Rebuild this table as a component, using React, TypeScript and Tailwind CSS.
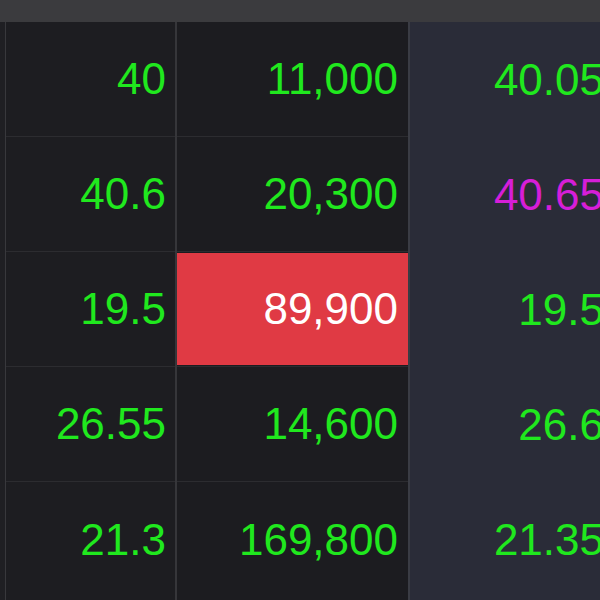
import React from "react";

type Row = { a: string; b: string; c: string; cColor: string; hl?: boolean };

const rows: Row[] = [
  { a: "40", b: "11,000", c: "40.05", cColor: "text-[#20e81e]" },
  { a: "40.6", b: "20,300", c: "40.65", cColor: "text-[#d61ed8]" },
  { a: "19.5", b: "89,900", c: "19.5", cColor: "text-[#20e81e]", hl: true },
  { a: "26.55", b: "14,600", c: "26.6", cColor: "text-[#20e81e]" },
  { a: "21.3", b: "169,800", c: "21.35", cColor: "text-[#20e81e]" },
];

export default function App() {
  return (
    <div
      className="w-[600px] h-[600px] overflow-hidden bg-[#1e1e22] flex flex-col"
      style={{ fontFamily: '"Liberation Sans", Arial, sans-serif' }}
    >
      <div className="h-[22px] shrink-0 bg-[#3b3b3e] w-[620px]" />
      <div className="flex w-[620px] flex-1">
        <div className="w-[6px] shrink-0 bg-[#1f1f23] border-r border-[#38383c]" />
        <div className="w-[171px] shrink-0 bg-[#1d1d21] border-r-2 border-[#36363a] flex flex-col">
          {rows.map((r, i) => (
            <div
              key={i}
              className={`h-[115px] shrink-0 flex items-center justify-end pr-[9px] text-[44px] text-[#20e81e] ${i < rows.length - 1 ? "border-b border-[#2c2c30]" : ""}`}
            >
              {r.a}
            </div>
          ))}
        </div>
        <div className="w-[233px] shrink-0 bg-[#1c1c20] border-r-2 border-[#3a3c44] flex flex-col">
          {rows.map((r, i) =>
            r.hl ? (
              <div
                key={i}
                className="h-[115px] shrink-0 flex py-[1px] border-b border-[#2c2c30]"
              >
                <div className="flex-1 bg-[#e03a44] flex items-center justify-end pr-[10px] text-[44px] text-white">
                  {r.b}
                </div>
              </div>
            ) : (
              <div
                key={i}
                className={`h-[115px] shrink-0 flex items-center justify-end pr-[10px] text-[44px] text-[#20e81e] ${i < rows.length - 1 ? "border-b border-[#2c2c30]" : ""}`}
              >
                {r.b}
              </div>
            )
          )}
        </div>
        <div className="w-[210px] shrink-0 bg-[#2a2c38] flex flex-col">
          {rows.map((r, i) => (
            <div
              key={i}
              className={`h-[115px] shrink-0 flex items-center justify-end pr-[16px] text-[44px] ${r.cColor}`}
            >
              {r.c}
            </div>
          ))}
        </div>
      </div>
    </div>
  );
}
